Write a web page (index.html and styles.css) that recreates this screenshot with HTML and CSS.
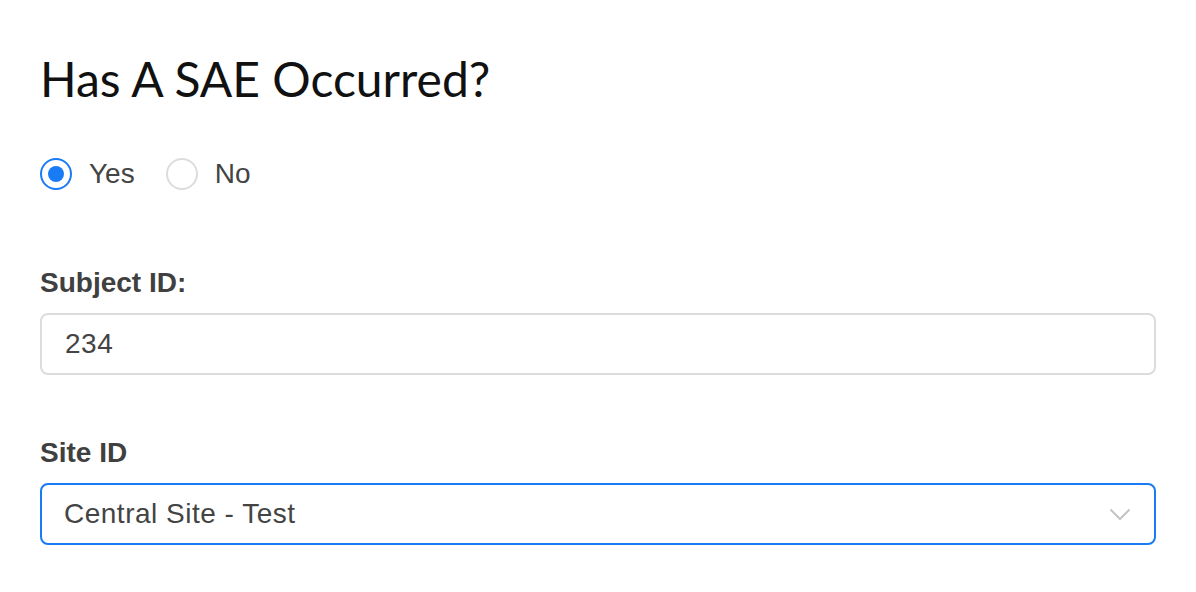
FILE: index.html
```html
<!DOCTYPE html>
<html lang="en">
<head>
<meta charset="utf-8">
<title>SAE Form</title>
<link rel="stylesheet" href="styles.css">
</head>
<body>
<main class="page">
  <h1 class="title">Has A SAE Occurred?</h1>
  <div class="radios">
    <label class="radio"><span class="radio-dot checked"></span><span class="radio-text">Yes</span></label>
    <label class="radio"><span class="radio-dot"></span><span class="radio-text">No</span></label>
  </div>
  <div class="field field-first">
    <div class="field-label">Subject ID:</div>
    <div class="input">234</div>
  </div>
  <div class="field">
    <div class="field-label">Site ID</div>
    <div class="input select">
      <span>Central Site - Test</span>
      <svg class="chev" width="22" height="13" viewBox="0 0 22 13"><path d="M1.5 1.5 L11 11 L20.5 1.5" fill="none" stroke="#c4c4c4" stroke-width="2"/></svg>
    </div>
  </div>
</main>
</body>
</html>
```
FILE: styles.css
```css
html, body {
  margin: 0;
  padding: 0;
  background: #ffffff;
}
.page {
  padding: 49px 40px 0 40px;
  font-family: "Liberation Sans", Arial, sans-serif;
  color: #444444;
}
.title {
  margin: 0;
  font-family: Lato, sans-serif;
  font-weight: 400;
  font-size: 48px;
  line-height: 60px;
  color: #111111;
}
.radios {
  margin-top: 45px;
  display: flex;
  align-items: center;
  gap: 31px;
  height: 40px;
}
.radio {
  display: flex;
  align-items: center;
  gap: 17px;
  font-size: 28px;
  line-height: 40px;
  color: #444444;
}
.radio-dot {
  box-sizing: border-box;
  width: 32px;
  height: 32px;
  border-radius: 50%;
  border: 2px solid #dcdcdc;
  display: flex;
  align-items: center;
  justify-content: center;
}
.radio-dot.checked {
  border-color: #1a7cf5;
}
.radio-dot.checked::after {
  content: "";
  width: 16px;
  height: 16px;
  border-radius: 50%;
  background: #1a7cf5;
}
.field {
  margin-top: 58px;
}
.field-first {
  margin-top: 69px;
}
.field-label {
  font-size: 28px;
  line-height: 40px;
  font-weight: 700;
  color: #404040;
  margin-bottom: 10px;
}
.input {
  box-sizing: border-box;
  height: 62px;
  border: 2px solid #dcdcdc;
  border-radius: 8px;
  padding: 0 23px;
  display: flex;
  align-items: center;
  font-size: 28px;
  letter-spacing: 0.5px;
  color: #444444;
}
.select {
  border-color: #1a7cf5;
  justify-content: space-between;
  padding-left: 22px;
  padding-right: 23px;
}
.chev {
  display: block;
}
```
